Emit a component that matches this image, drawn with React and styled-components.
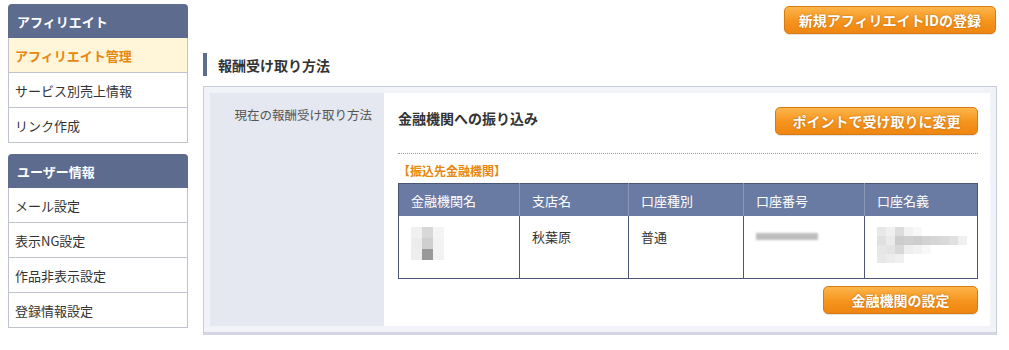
import styled, { createGlobalStyle } from 'styled-components';

const GlobalStyle = createGlobalStyle`
 body {
  margin: 0;
  background: #fff;
  font-family: "Noto Sans CJK JP", "Noto Sans", sans-serif;
  color: #333;
 }
`;

const Page = styled.div`
 display: flex;
 align-items: flex-start;
 gap: 15px;
 padding: 4px 12px 0 8px;
 width: 1009px;
 box-sizing: border-box;
`;

const Sidebar = styled.nav`
 width: 180px;
 flex: none;
 display: flex;
 flex-direction: column;
 gap: 11px;
`;

const MenuBox = styled.div`
 display: flex;
 flex-direction: column;
`;

const MenuHeader = styled.div`
 height: 34px;
 display: flex;
 align-items: center;
 padding-left: 9px;
 background: #5d6b8e;
 color: #fff;
 font-weight: bold;
 font-size: 13px;
 border-radius: 4px 4px 0 0;
`;

const MenuItem = styled.a`
 height: 34px;
 display: flex;
 align-items: center;
 padding-left: 6px;
 font-size: 13px;
 color: ${p => (p.$active ? '#e8870e' : '#333')};
 background: ${p => (p.$active ? '#fff5d9' : '#fff')};
 font-weight: ${p => (p.$active ? 'bold' : 'normal')};
 border: 1px solid #bfc3cd;
 border-top: none;
 text-decoration: none;
`;

const Main = styled.main`
 flex: 1;
 display: flex;
 flex-direction: column;
`;

const TopBar = styled.div`
 display: flex;
 justify-content: flex-end;
 padding-top: 2px;
 padding-right: 1px;
`;

const OrangeButton = styled.button`
 height: ${p => p.$h || 28}px;
 padding: 0 ${p => p.$px || 14}px;
 min-width: ${p => p.$w || 0}px;
 border: 1px solid #d87a12;
 border-radius: 5px;
 background: linear-gradient(#fdb54a, #f5941d 55%, #ef8612);
 color: #fff;
 font-family: inherit;
 font-size: 14px;
 font-weight: bold;
 text-shadow: 0 0 2px rgba(150, 80, 0, 0.7);
 box-shadow: 0 1px 1px rgba(0, 0, 0, 0.12);
 cursor: pointer;
`;

const Heading = styled.h2`
 margin: 19px 0 10px;
 height: 23px;
 display: flex;
 align-items: center;
 gap: 11px;
 font-size: 14px;
 font-weight: bold;
 color: #333;
 &::before {
  content: '';
  width: 4px;
  height: 23px;
  background: #5f6d8f;
 }
`;

const Panel = styled.section`
 border: 1px solid #c9cdd9;
 border-bottom: 3px solid #d3d6e2;
 background: #f1f3f8;
 padding: 6px;
`;

const PanelInner = styled.div`
 display: flex;
 background: #fff;
 min-height: 232px;
`;

const LabelCol = styled.div`
 width: 174px;
 flex: none;
 background: #e5e8f1;
 text-align: right;
 padding: 12px 12px 0 0;
 box-sizing: border-box;
 font-size: 12.5px;
 color: #555;
`;

const ContentCol = styled.div`
 flex: 1;
 padding: 14px 12px 12px 14px;
 display: flex;
 flex-direction: column;
`;

const MethodRow = styled.div`
 display: flex;
 justify-content: space-between;
 align-items: center;
 padding-bottom: 18px;
 border-bottom: 1px dotted #9a9a9a;
`;

const MethodName = styled.div`
 font-size: 14px;
 font-weight: bold;
 color: #333;
 margin-top: -6px;
`;

const SubTitle = styled.div`
 margin-top: 9px;
 font-size: 12px;
 font-weight: bold;
 color: #e8870e;
 line-height: 16px;
`;

const Table = styled.table`
 margin-top: 4px;
 width: 100%;
 border-collapse: collapse;
 table-layout: fixed;
 font-size: 13px;
 border: 1px solid #4b5674;
`;

const Th = styled.th`
 width: ${p => (p.$w ? `${p.$w}px` : 'auto')};
 background: #6a7ba3;
 color: #fff;
 font-weight: normal;
 text-align: left;
 height: 32px;
 padding: 0 12px;
 border-left: 1px solid #8a98b8;
 &:first-child { border-left: none; }
`;

const Td = styled.td`
 height: 51px;
 vertical-align: top;
 padding: 11px 12px 0;
 border-left: 1px solid #4b5674;
 color: #333;
 &:first-child { border-left: none; }
`;

const Blur = styled.span`
 display: block;
 width: ${p => p.$w}px;
 height: ${p => p.$h}px;
 margin-top: ${p => p.$t || 0}px;
 background: ${p => p.$bg};
 filter: blur(1px);
`;

const Mosaic = styled.div`
 display: grid;
 grid-template-columns: repeat(${p => p.$cols}, ${p => p.$size}px);
 grid-auto-rows: ${p => p.$size}px;
 filter: blur(0.6px);
`;

const Cell = styled.span`
 background: ${p => p.$c};
`;

const Footer = styled.div`
 display: flex;
 justify-content: flex-end;
 margin-top: 7px;
`;

const sideMenus = [
 {
  title: 'アフィリエイト',
  items: ['アフィリエイト管理', 'サービス別売上情報', 'リンク作成'],
  active: 0,
 },
 {
  title: 'ユーザー情報',
  items: ['メール設定', '表示NG設定', '作品非表示設定', '登録情報設定'],
  active: -1,
 },
];

const columns = [
 { label: '金融機関名', w: 96 },
 { label: '支店名', w: 84 },
 { label: '口座種別', w: 90 },
 { label: '口座番号', w: 96 },
 { label: '口座名義' },
];

const bankMosaic = ['#f0f0f0', '#d8d8d8', '#f4f4f4', '#ececec', '#cfcfcf', '#f2f2f2', '#eeeeee', '#999999', '#f2f2f2'];
const nameMosaic = [
 '#e8e8e8', '#f0f0f0', '#dcdcdc', '#f2f2f2', '#f8f8f8', '#ffffff', '#ffffff', '#ffffff', '#ffffff', '#ffffff',
 '#e0e0e0', '#ebebeb', '#cccccc', '#d0d0d0', '#cdcdcd', '#d2d2d2', '#d6d6d6', '#dadada', '#e0e0e0', '#f0f0f0',
 '#e6e6e6', '#e4e4e4', '#d8d8d8', '#eeeeee', '#f2f2f2', '#f8f8f8', '#ffffff', '#ffffff', '#ffffff', '#ffffff',
 '#e8e8e8', '#ececec', '#f0f0f0', '#ffffff', '#ffffff', '#ffffff', '#ffffff', '#ffffff', '#ffffff', '#ffffff',
];

export default function App() {
 return (
  <>
   <GlobalStyle />
   <Page>
    <Sidebar>
     {sideMenus.map(menu => (
      <MenuBox key={menu.title}>
       <MenuHeader>{menu.title}</MenuHeader>
       {menu.items.map((item, i) => (
        <MenuItem key={item} $active={i === menu.active}>{item}</MenuItem>
       ))}
      </MenuBox>
     ))}
    </Sidebar>
    <Main>
     <TopBar>
      <OrangeButton $h={28} $w={203}>新規アフィリエイトIDの登録</OrangeButton>
     </TopBar>
     <Heading>報酬受け取り方法</Heading>
     <Panel>
      <PanelInner>
       <LabelCol>現在の報酬受け取り方法</LabelCol>
       <ContentCol>
        <MethodRow>
         <MethodName>金融機関への振り込み</MethodName>
         <OrangeButton $h={28} $w={203}>ポイントで受け取りに変更</OrangeButton>
        </MethodRow>
        <SubTitle>【振込先金融機関】</SubTitle>
        <Table>
         <thead>
          <tr>
           {columns.map(col => <Th key={col.label} $w={col.w}>{col.label}</Th>)}
          </tr>
         </thead>
         <tbody>
          <tr>
           <Td>
            <Mosaic $cols={3} $size={11}>
             {bankMosaic.map((c, i) => <Cell key={i} $c={c} />)}
            </Mosaic>
           </Td>
           <Td>秋葉原</Td>
           <Td>普通</Td>
           <Td><Blur $w={62} $h={7} $t={6} $bg="#bdbdbd" /></Td>
           <Td>
            <Mosaic $cols={10} $size={9}>
             {nameMosaic.map((c, i) => <Cell key={i} $c={c} />)}
            </Mosaic>
           </Td>
          </tr>
         </tbody>
        </Table>
        <Footer>
         <OrangeButton $h={28} $w={155}>金融機関の設定</OrangeButton>
        </Footer>
       </ContentCol>
      </PanelInner>
     </Panel>
    </Main>
   </Page>
  </>
 );
}
